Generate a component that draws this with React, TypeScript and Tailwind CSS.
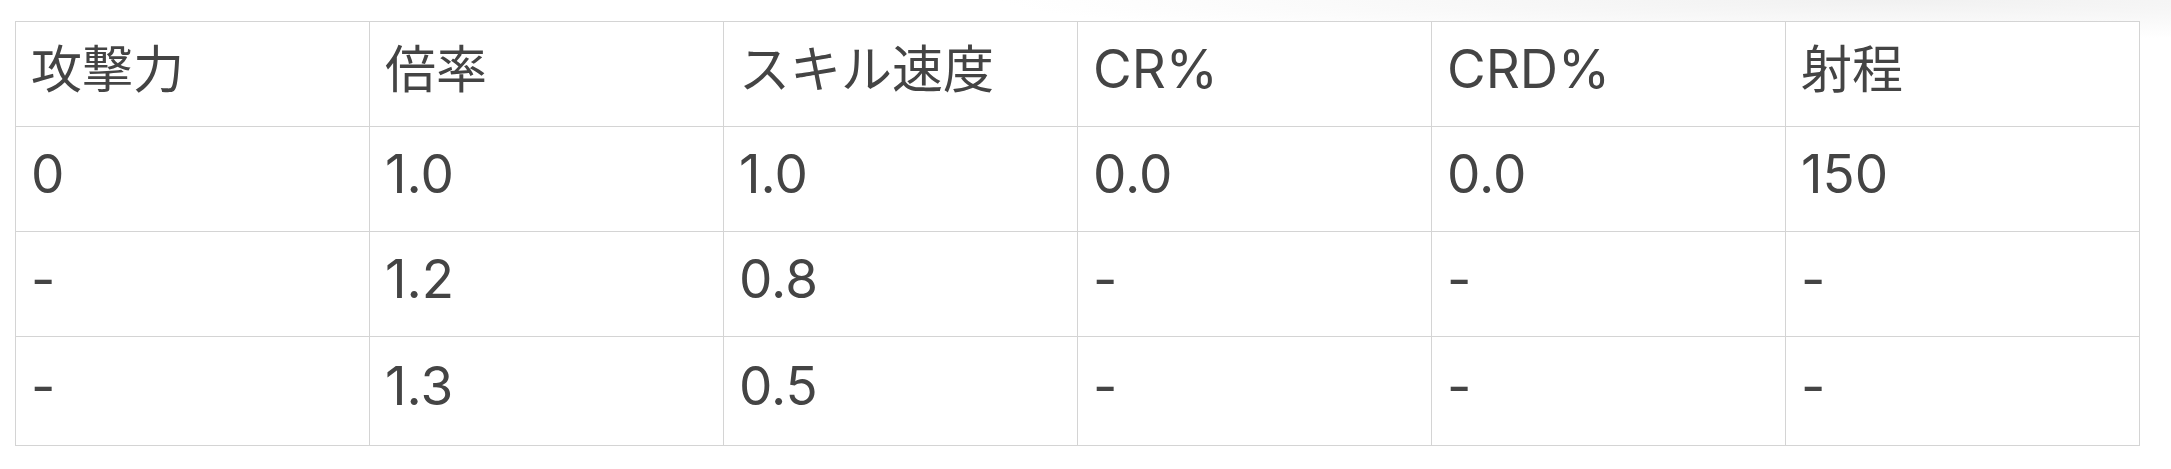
import React from "react";

const headers = ["攻撃力", "倍率", "スキル速度", "CR%", "CRD%", "射程"];
const cjk = [true, true, true, false, false, true];
const rows = [
  ["0", "1.0", "1.0", "0.0", "0.0", "150"],
  ["-", "1.2", "0.8", "-", "-", "-"],
  ["-", "1.3", "0.5", "-", "-", "-"],
];

export default function App() {
  return (
    <div
      className="w-[2171px] h-[469px] bg-white bg-[radial-gradient(ellipse_900px_40px_at_1900px_0px,#f1f1f1,#ffffff)] pt-[21px] pl-[15px]"
      style={{ fontFamily: '"Inter", "Noto Sans CJK JP", sans-serif' }}
    >
      <table className="border-collapse w-[2124px] table-fixed bg-white text-[#444444] text-[53px] leading-none">
        <thead>
          <tr className="h-[105px]">
            {headers.map((h, i) => (
              <th
                key={i}
                className="border border-[#d4d4d4] w-[354px] px-[15px] text-left font-normal align-middle"
              >
                <span
                  className={
                    cjk[i]
                      ? "relative top-[-5px] text-[51px]"
                      : "relative top-[-5px]"
                  }
                >
                  {h}
                </span>
              </th>
            ))}
          </tr>
        </thead>
        <tbody>
          {rows.map((r, ri) => (
            <tr key={ri} className={ri === 2 ? "h-[109px]" : "h-[105px]"}>
              {r.map((c, ci) => (
                <td
                  key={ci}
                  className="border border-[#d4d4d4] px-[15px] text-left align-middle"
                >
                  <span className="relative top-[-5px]">{c}</span>
                </td>
              ))}
            </tr>
          ))}
        </tbody>
      </table>
    </div>
  );
}
